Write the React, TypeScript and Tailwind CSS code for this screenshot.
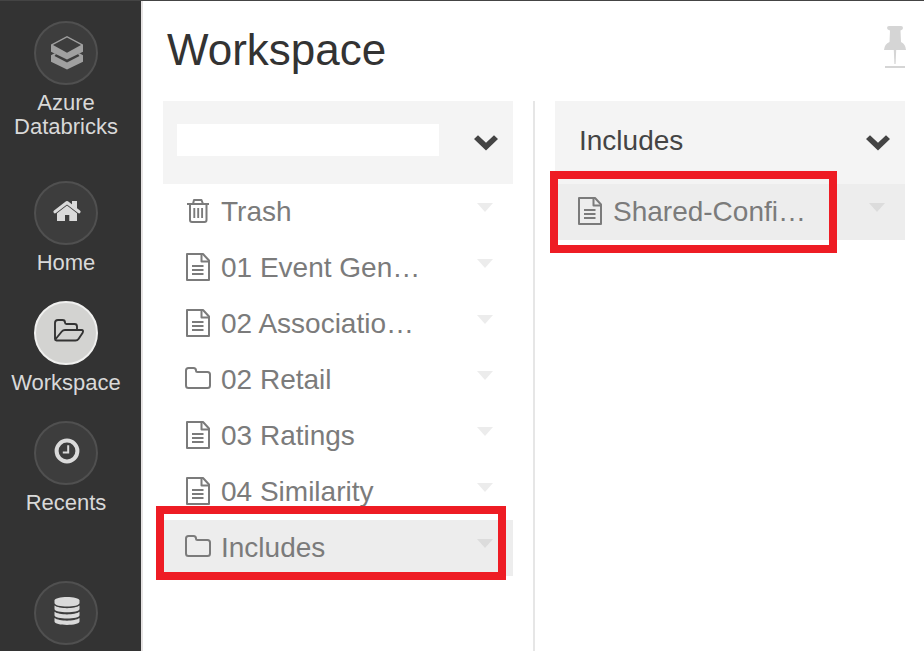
import React from "react";

type Kind = "trash" | "doc" | "folder";

function RowIcon({ kind }: { kind: Kind }) {
  return (
    <svg className="ml-5 h-14 w-7 shrink-0" viewBox="0 0 28 56" fill="none" stroke="#7b7b7b" strokeWidth="2" strokeLinejoin="round">
      {kind === "doc" && (
        <>
          <path d="M4 14H20L26 20.500V40H4Z" />
          <path d="M18.500 14V21.500H26" />
          <path d="M9 26H20.500M9 30H20.500M9 34H20.500" strokeWidth="1.8" />
        </>
      )}
      {kind === "folder" && <path d="M3 18.5Q3 16 5.5 16H10.5Q13 16 13 18.5Q13 20 14.5 20H24.5Q27 20 27 22.5V33.5Q27 36 24.5 36H5.5Q3 36 3 33.5Z" />}
      {kind === "trash" && (
        <>
          <path d="M4 20H26M10 20L11 16H18.5L20 20M7 20V36Q7 38 9 38H21.5Q23.5 38 23.5 36V20" />
          <path d="M11.3 24V34M15.2 24V34M19.1 24V34" strokeWidth="1.9" />
        </>
      )}
    </svg>
  );
}

function Row({ kind, label, selected = false }: { kind: Kind; label: string; selected?: boolean }) {
  return (
    <div className={selected ? "flex h-14 items-start bg-[#ededed]" : "flex h-14 items-start"}>
      <RowIcon kind={kind} />
      <span className="ml-2.5 flex-1 whitespace-nowrap text-[28px] leading-[55px] text-[#7b7b7b]">{label}</span>
      <svg className="mt-[19px] mr-5 h-[9px] w-4 shrink-0" viewBox="0 0 16 9">
        <path d="M0 0H16L8 9Z" fill={selected ? "#dcdcdc" : "#ececec"} />
      </svg>
    </div>
  );
}

function Chevron() {
  return (
    <svg className="mr-[15px] h-4 w-6 shrink-0" viewBox="0 0 24 16">
      <path d="M4 .3L12 7.800L20 .3L24 4L12 15.500L0 4Z" fill="#444" />
    </svg>
  );
}

function NavItem({ label, active = false, children }: { label?: string; active?: boolean; children: React.ReactNode }) {
  return (
    <div className="flex w-[132px] flex-col items-center">
      <div
        className={
          active
            ? "flex size-16 shrink-0 items-center justify-center rounded-full border-2 border-[#f0f0ef] bg-[#d3d3d1]"
            : "flex size-16 shrink-0 items-center justify-center rounded-full border-2 border-[#505050] bg-[#3d3d3d]"
        }
      >
        <svg className="size-16 shrink-0" viewBox="0 0 64 64">
          {children}
        </svg>
      </div>
      {label && <div className="mt-1.5 text-center text-[22px] leading-6 text-[#d9d9d9]">{label}</div>}
    </div>
  );
}

export default function App() {
  return (
    <div className="relative flex h-[651px] w-[924px] overflow-hidden border-t border-[#444] bg-white font-['Liberation_Sans',Arial,sans-serif]">
      <nav className="flex w-[143px] shrink-0 flex-col border-r-2 border-[#e6e3e3] bg-[#333] pt-5">
        <div className="h-40">
          <NavItem label="Azure Databricks">
            <path d="M33 15L17 23.5V30.8L33 38.5L49 30.8V23.5ZM33 16.5L47 24L33 31.8L19 24Z" fill="#a0a0a0" fillRule="evenodd" />
            <path d="M17 34.2L20.500 32.200L22 33L20.500 35L33 41.5L45.500 35L44 33L45.500 32.200L49 34.2V40.7L33 48.5L17 40.7Z" fill="#a0a0a0" />
          </NavItem>
        </div>
        <div className="h-[120px]">
          <NavItem label="Home">
            <path d="M21 30.8L33 21.6L45 30.8" fill="none" stroke="#dadada" strokeWidth="3.2" strokeLinecap="round" strokeLinejoin="round" />
            <path d="M38 20H43V28L38 24ZM23 32.200L33 24.500L43 32.200V40H35.300V34H31V40H23Z" fill="#dadada" />
          </NavItem>
        </div>
        <div className="h-[120px]">
          <NavItem label="Workspace" active>
            <path d="M21 38V22Q21 19 24 19H28.5Q31 19 31 21.5Q31 23 32.5 23H40.5Q43 23 43 25.5V29M21 38Q21 39.5 22.5 39.5H41.5Q43.5 39.5 44.5 38L48.5 32Q50 29 47.5 29H31Q29 29 27.8 30.5L21.300 38.500" fill="none" stroke="#333" strokeWidth="1.9" strokeLinejoin="round" />
          </NavItem>
        </div>
        <div className="h-40">
          <NavItem label="Recents">
            <circle cx="33" cy="30" r="10.4" fill="none" stroke="#dadada" strokeWidth="4" />
            <path d="M34.2 24.2V31.4H28.800" fill="none" stroke="#dadada" strokeWidth="2" />
          </NavItem>
        </div>
        <NavItem>
          <path d="M20.5 19.5C20.5 14.8 45.5 14.8 45.5 19.5V22C45.5 26.7 20.5 26.7 20.5 22Z" fill="#dadada" />
          <path d="M20.5 24.5C25 28 41 28 45.5 24.5V28C45.5 32.3 20.5 32.3 20.5 28ZM20.5 30.8C25 34.3 41 34.3 45.5 30.8V34.3C45.5 38.6 20.5 38.6 20.5 34.3ZM20.5 37C25 40.5 41 40.5 45.5 37V40.5C45.5 45 20.5 45 20.5 40.5Z" fill="#dadada" />
        </NavItem>
      </nav>

      <main className="flex min-w-0 flex-1 flex-col">
        <header className="flex h-[100px] shrink-0 items-start justify-between pr-[18px] pl-6">
          <h1 className="pt-6 text-[44px] leading-[50px] text-[#333]">Workspace</h1>
          <svg className="mt-6 h-[43px] w-[22px]" viewBox="0 0 22 43" fill="#d5d5d5">
            <path d="M5 1H17Q19 1 19 3Q19 4.5 16.5 5.500L17 17Q21.5 19 22 25H0Q.5 19 5.500 17L6 5.500Q3 4.500 3 3Q3 1 5 1Z" />
            <path d="M9.800 25H12.200L11.600 39H10.400Z" />
            <path d="M1 41H21V43H1Z" />
          </svg>
        </header>
        <div className="flex flex-1 pl-5">
          <section className="w-[350px]">
            <div className="flex h-[83px] items-center justify-between bg-[#f4f4f4]">
              <div className="mb-[5px] ml-3.5 h-8 w-[262px] bg-white" />
              <Chevron />
            </div>
            <Row kind="trash" label="Trash" />
            <Row kind="doc" label="01 Event Gen…" />
            <Row kind="doc" label="02 Associatio…" />
            <Row kind="folder" label="02 Retail" />
            <Row kind="doc" label="03 Ratings" />
            <Row kind="doc" label="04 Similarity" />
            <Row kind="folder" label="Includes" selected />
          </section>
          <div className="ml-5 w-0.5 bg-[#e6e6e6]" />
          <section className="ml-5 w-[350px]">
            <div className="flex h-[83px] items-center justify-between bg-[#f4f4f4]">
              <h2 className="mb-1 ml-6 text-[28px] leading-8 text-[#444]">Includes</h2>
              <Chevron />
            </div>
            <Row kind="doc" label="Shared-Confi…" selected />
          </section>
        </div>
      </main>

      <div className="absolute top-[505px] left-[156px] h-[74px] w-[350px] border-8 border-[#ee1c24]" />
      <div className="absolute top-[170px] left-[550px] h-[82px] w-[287px] border-8 border-[#ee1c24]" />
    </div>
  );
}
